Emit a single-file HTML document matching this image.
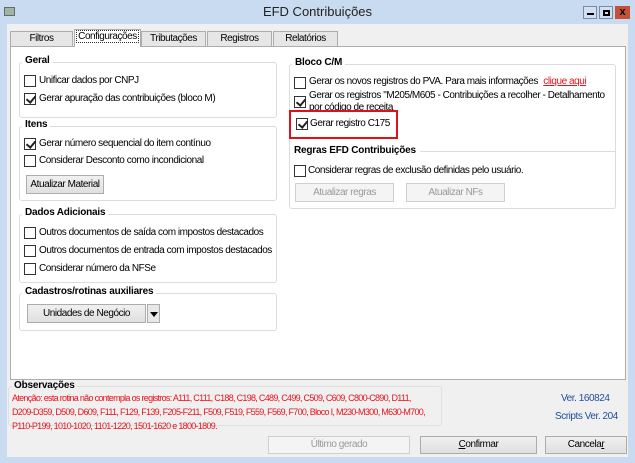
<!DOCTYPE html>
<html><head><meta charset="utf-8"><style>
*{box-sizing:border-box;margin:0;padding:0}
body{width:635px;height:463px;overflow:hidden;background:#c8dbf0;font-family:"Liberation Sans",sans-serif;font-size:10px;letter-spacing:-0.45px;color:#000;position:relative}
.a{position:absolute;white-space:nowrap}
.title{left:0;top:0;width:635px;height:24px;text-align:center;line-height:24px;font-size:13px;letter-spacing:0;color:#222}
.client{left:7px;top:24px;width:621px;height:433px;background:#f0f0f0}
.tab{position:absolute;height:15px;border:1px solid #adadad;border-bottom:none;background:#e6e6e6;text-align:center;line-height:14px}
.panel{left:10px;top:46px;width:616px;height:334px;background:#fff;border:1px solid #adadad}
.grp{position:absolute;border:1px solid #dcdcdc;border-radius:3px}
.gt{position:absolute;font-weight:bold;background:#fff;padding:0 3px;top:-8px;left:2px;letter-spacing:-0.2px}
.cb{position:absolute;width:12px;height:12px;border:1px solid #333;background:#fff}
.cb.c::after{content:"";position:absolute;left:3px;top:0px;width:4px;height:7px;border:solid #222;border-width:0 2px 2px 0;transform:rotate(40deg)}
.btn{position:absolute;border:1px solid #acacac;background:linear-gradient(#f0f0f0,#e0e0e0);text-align:center}
.dis{color:#9a9a9a;border-color:#cfcfcf;background:#f4f4f4}
.red{color:#e8141c}
</style></head><body>
<div class="a title">EFD Contribuições</div>
<div class="a" style="left:4px;top:7px;width:11px;height:9px;background:#9fb5a0;border:1px solid #667"></div>
<div class="a" style="left:583px;top:6px;width:14px;height:13px;border:1px solid #7a8aa0;background:#d0e0f2"><div style="position:absolute;left:3px;top:6px;width:7px;height:2px;background:#000"></div></div>
<div class="a" style="left:599px;top:6px;width:14px;height:13px;border:1px solid #7a8aa0;background:#d0e0f2"><div style="position:absolute;left:3px;top:3px;width:7px;height:6px;border:2px solid #000"></div></div>
<div class="a" style="left:615px;top:6px;width:15px;height:13px;background:#c7503b;color:#000;font-weight:bold;font-size:11px;text-align:center;line-height:13px;letter-spacing:0">x</div>
<div class="a client"></div>
<div class="tab" style="left:10px;top:31px;width:63px">Filtros</div>
<div class="tab" style="left:141px;top:31px;width:65px">Tributações</div>
<div class="tab" style="left:207px;top:31px;width:65px">Registros</div>
<div class="tab" style="left:273px;top:31px;width:65px">Relatórios</div>
<div class="a panel"></div>
<div class="tab" style="left:74px;top:29px;width:67px;height:18px;background:#fff;z-index:2"><span style="border:1px dotted #333;padding:0 1px">Configurações</span></div>

<div class="grp" style="left:19px;top:62px;width:258px;height:56px"><div class="gt">Geral</div></div>
<div class="cb" style="left:24px;top:75px"></div><div class="a" style="left:39px;top:75px">Unificar dados por CNPJ</div>
<div class="cb c" style="left:24px;top:93px"></div><div class="a" style="left:39px;top:93px">Gerar apuração das contribuições (bloco M)</div>

<div class="grp" style="left:19px;top:126px;width:258px;height:75px"><div class="gt">Itens</div></div>
<div class="cb c" style="left:24px;top:138px"></div><div class="a" style="left:39px;top:138px">Gerar número sequencial do item contínuo</div>
<div class="cb" style="left:24px;top:155px"></div><div class="a" style="left:39px;top:155px">Considerar Desconto como incondicional</div>
<div class="btn" style="left:26px;top:175px;width:78px;height:19px;line-height:17px">Atualizar Material</div>

<div class="grp" style="left:19px;top:214px;width:258px;height:69px"><div class="gt">Dados Adicionais</div></div>
<div class="cb" style="left:24px;top:227px"></div><div class="a" style="left:39px;top:227px">Outros documentos de saída com impostos destacados</div>
<div class="cb" style="left:24px;top:245px"></div><div class="a" style="left:39px;top:245px">Outros documentos de entrada com impostos destacados</div>
<div class="cb" style="left:24px;top:263px"></div><div class="a" style="left:39px;top:263px">Considerar número da NFSe</div>

<div class="grp" style="left:19px;top:293px;width:258px;height:38px"><div class="gt">Cadastros/rotinas auxiliares</div></div>
<div class="btn" style="left:27px;top:304px;width:119px;height:19px;line-height:17px">Unidades de Negócio</div>
<div class="btn" style="left:147px;top:304px;width:13px;height:19px;background:#e8e8e8"><div style="position:absolute;left:2px;top:7px;border:4px solid transparent;border-top:5px solid #000"></div></div>

<div class="grp" style="left:289px;top:64px;width:327px;height:145px"><div class="gt">Bloco C/M</div></div>
<div class="cb" style="left:294px;top:77px"></div><div class="a" style="left:309px;top:76px">Gerar os novos registros do PVA. Para mais informações <span class="red" style="text-decoration:underline;margin-left:3px">clique aqui</span></div>
<div class="cb c" style="left:294px;top:96px"></div><div class="a" style="left:309px;top:90px;line-height:12px;height:22px;overflow:hidden;white-space:normal;width:300px">Gerar os registros "M205/M605 - Contribuições a recolher - Detalhamento por código de receita</div>
<div class="a" style="left:289px;top:110px;width:109px;height:29px;border:2px solid #e0101a;background:#fff"></div>
<div class="cb c" style="left:296px;top:118px"></div><div class="a" style="left:310px;top:118px">Gerar registro C175</div>
<div class="a" style="left:291px;top:145px;font-weight:bold;background:#fff;padding:0 3px;letter-spacing:-0.2px">Regras EFD Contribuições</div>
<div class="a" style="left:420px;top:151px;width:196px;border-top:1px solid #dcdcdc"></div>
<div class="cb" style="left:294px;top:165px"></div><div class="a" style="left:308px;top:165px">Considerar regras de exclusão definidas pelo usuário.</div>
<div class="btn dis" style="left:295px;top:183px;width:99px;height:19px;line-height:17px">Atualizar regras</div>
<div class="btn dis" style="left:406px;top:183px;width:99px;height:19px;line-height:17px">Atualizar NFs</div>

<div class="grp" style="left:8px;top:386px;width:434px;height:40px;border-color:#e0e0e0"></div>
<div class="a" style="left:12px;top:380px;font-weight:bold;background:#f0f0f0;padding:0 2px;letter-spacing:-0.2px">Observações</div>
<div class="a red" style="left:12px;top:391px;line-height:14px;font-size:9px;letter-spacing:-0.7px">Atenção: esta rotina não contempla os registros: A111, C111, C188, C198, C489, C499, C509, C609, C800-C890, D111,<br>D209-D359, D509, D609, F111, F129, F139, F205-F211, F509, F519, F559, F569, F700, Bloco I, M230-M300, M630-M700,<br>P110-P199, 1010-1020, 1101-1220, 1501-1620 e 1800-1809.</div>
<div class="a" style="left:561px;top:393px;color:#1f4e9c">Ver. 160824</div>
<div class="a" style="left:555px;top:411px;color:#1f4e9c">Scripts Ver. 204</div>
<div class="btn dis" style="left:268px;top:436px;width:142px;height:18px;line-height:16px">Último gerado</div>
<div class="btn" style="left:420px;top:436px;width:117px;height:18px;line-height:16px"><u>C</u>onfirmar</div>
<div class="btn" style="left:545px;top:436px;width:82px;height:18px;line-height:16px">Cancela<u>r</u></div>
</body></html>
